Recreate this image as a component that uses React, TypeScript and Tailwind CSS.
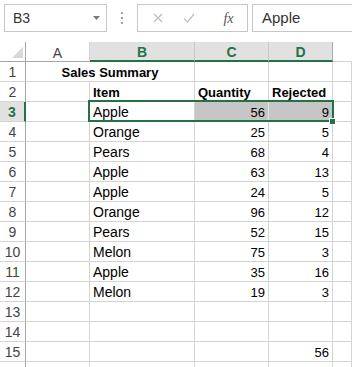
import React from 'react';

const rows: { item: string; qty: string; rej: string }[] = [
  { item: 'Apple', qty: '56', rej: '9' },
  { item: 'Orange', qty: '25', rej: '5' },
  { item: 'Pears', qty: '68', rej: '4' },
  { item: 'Apple', qty: '63', rej: '13' },
  { item: 'Apple', qty: '24', rej: '5' },
  { item: 'Orange', qty: '96', rej: '12' },
  { item: 'Pears', qty: '52', rej: '15' },
  { item: 'Melon', qty: '75', rej: '3' },
  { item: 'Apple', qty: '35', rej: '16' },
  { item: 'Melon', qty: '19', rej: '3' },
];

const cell = 'h-[20px] border-r border-b border-[#d4d4d4] flex items-center overflow-hidden whitespace-nowrap pt-[2px]';
const rowHead = 'h-[20px] border-r border-b border-r-[#a6a6a6] border-b-[#d4d4d4] flex items-center justify-center pt-[2px] text-[14px] text-[#444]';

function Toolbar() {
  return (
    <div className="h-[42px] flex items-start pt-[4px] pl-[4px] bg-white overflow-hidden">
      {/* name box */}
      <div className="shrink-0 w-[103px] h-[28px] border border-[#c6c6c6] flex items-center pl-[8px] pr-[6px] text-[14px] text-[#333]">
        <span className="flex-1 pt-[1px]">B3</span>
        <svg width="7" height="4" viewBox="0 0 7 4">
          <path d="M0 0h7L3.5 4z" fill="#7a7a7a" />
        </svg>
      </div>
      {/* grip dots */}
      <div className="shrink-0 w-[30px] h-[28px] flex flex-col items-center justify-center gap-[3px]">
        <span className="w-[2px] h-[2px] bg-[#a0a0a0]" />
        <span className="w-[2px] h-[2px] bg-[#a0a0a0]" />
        <span className="w-[2px] h-[2px] bg-[#a0a0a0]" />
      </div>
      {/* cancel / enter / fx */}
      <div className="shrink-0 w-[111px] h-[28px] border border-[#c6c6c6] flex items-center">
        <div className="w-[38px] flex justify-center pl-[2px]">
          <svg width="10" height="10" viewBox="0 0 10 10">
            <path d="M1 1l8 8M9 1l-8 8" stroke="#bdbdbd" strokeWidth="1.2" />
          </svg>
        </div>
        <div className="w-[26px] flex justify-center">
          <svg width="12" height="10" viewBox="0 0 12 10">
            <path d="M1 5.5l3.5 3.5L11 1" stroke="#c4c4c4" strokeWidth="1.4" fill="none" />
          </svg>
        </div>
        <div className="flex-1 flex justify-center pl-[8px]">
          <span className="text-[14px] italic text-[#555] font-['Liberation_Serif',serif]">fx</span>
        </div>
      </div>
      {/* formula bar */}
      <div className="shrink-0 ml-[4px] w-[140px] h-[28px] border border-[#c6c6c6] flex items-center pl-[9px] text-[15px] text-[#333]">
        <span className="pt-[1px]">Apple</span>
      </div>
    </div>
  );
}

export default function App() {
  return (
    <div className="w-[352px] h-[367px] overflow-hidden bg-white font-['Liberation_Sans',Arial,sans-serif] text-black">
      <Toolbar />
      <div className="relative">
        <div className="grid grid-cols-[26px_64px_105px_74px_64px_1fr]">
          {/* header row */}
          <div className="h-[20px] border-r border-b border-r-[#a6a6a6] border-b-[#a6a6a6] flex items-end justify-end pr-[2px] pb-[3px]">
            <svg width="11" height="11" viewBox="0 0 11 11">
              <path d="M11 0v11H0z" fill="#d8d8d8" />
            </svg>
          </div>
          <div className="h-[20px] border-r border-b border-r-[#d4d4d4] border-b-[#a6a6a6] flex items-center justify-center pt-[3px] text-[14px] text-[#444]">
            A
          </div>
          <div className="h-[20px] bg-[#e1e1e1] border-r border-r-[#c8c8c8] border-b-2 border-b-[#217346] flex items-center justify-center pt-[3px] text-[14px] font-bold text-[#217346]">
            B
          </div>
          <div className="h-[20px] bg-[#e1e1e1] border-r border-r-[#c8c8c8] border-b-2 border-b-[#217346] flex items-center justify-center pt-[3px] text-[14px] font-bold text-[#217346]">
            C
          </div>
          <div className="h-[20px] bg-[#e1e1e1] border-r border-r-[#ababab] border-b-2 border-b-[#217346] flex items-center justify-center pt-[3px] text-[14px] font-bold text-[#217346]">
            D
          </div>
          <div className="h-[20px] border-b border-b-[#d4d4d4]" />

          {/* row 1 */}
          <div className={rowHead}>1</div>
          <div className={`${cell} col-span-2 justify-center text-[13px] font-bold`}>Sales Summary</div>
          <div className={cell} />
          <div className={cell} />
          <div className={cell} />

          {/* row 2 */}
          <div className={rowHead}>2</div>
          <div className={cell} />
          <div className={`${cell} pl-[3px] text-[13px] font-bold`}>Item</div>
          <div className={`${cell} pl-[3px] text-[13px] font-bold`}>Quantity</div>
          <div className={`${cell} pl-[3px] text-[13px] font-bold`}>Rejected</div>
          <div className={cell} />

          {rows.map((r, i) => {
            const n = i + 3;
            const sel = n === 3;
            return (
              <React.Fragment key={n}>
                <div
                  className={
                    sel
                      ? 'h-[20px] bg-[#e1e1e1] border-r-2 border-b border-r-[#217346] border-b-[#d4d4d4] flex items-center justify-center pt-[2px] text-[14px] font-bold text-[#217346]'
                      : rowHead
                  }
                >
                  {n}
                </div>
                <div className={cell} />
                <div className={`${cell} pl-[3px] text-[14px]`}>{r.item}</div>
                <div className={`${cell} justify-end pr-[3px] text-[13px] ${sel ? 'bg-[#c6c6c6] border-r-[#e6e6e6]' : ''}`}>
                  {r.qty}
                </div>
                <div className={`${cell} justify-end pr-[3px] text-[13px] ${sel ? 'bg-[#c6c6c6]' : ''}`}>{r.rej}</div>
                <div className={cell} />
              </React.Fragment>
            );
          })}

          {[13, 14, 15, 16].map((n) => (
            <React.Fragment key={n}>
              <div className={rowHead}>{n < 16 ? n : ''}</div>
              <div className={cell} />
              <div className={cell} />
              <div className={cell} />
              <div className={`${cell} justify-end pr-[3px] text-[13px]`}>{n === 15 ? '56' : ''}</div>
              <div className={cell} />
            </React.Fragment>
          ))}
        </div>

        {/* selection B3:D3 */}
        <div className="absolute left-[88px] top-[58px] w-[246px] h-[22px] border-2 border-[#217346] pointer-events-none" />
        {/* fill handle */}
        <div className="absolute left-[329px] top-[76px] w-[7px] h-[7px] bg-[#217346] border border-white pointer-events-none" />
      </div>
    </div>
  );
}
